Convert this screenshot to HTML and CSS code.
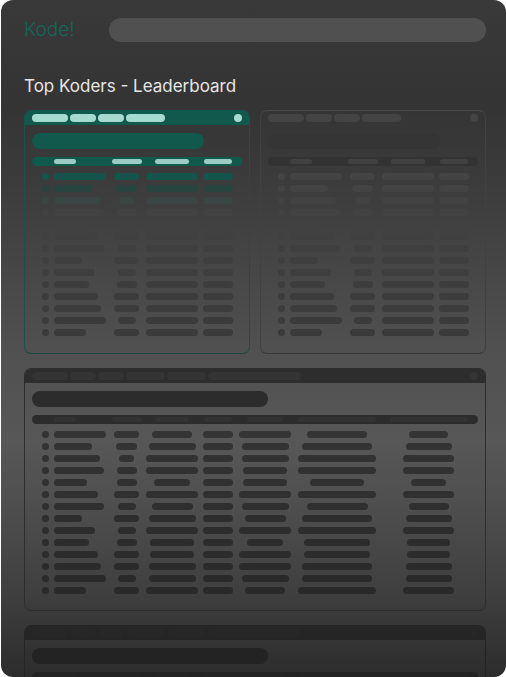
FILE: index.html
```html
<!DOCTYPE html>
<html lang="en">
<head>
<meta charset="utf-8">
<meta name="viewport" content="width=device-width, initial-scale=1">
<title>Kode!</title>
<link rel="stylesheet" href="styles.css">
</head>
<body>
<div class="app">
  <header class="topbar">
    <a class="logo" href="#">Kode!</a>
    <input class="search" type="search" aria-label="Search">
  </header>
  <main>
    <h1 class="title">Top Koders - Leaderboard</h1>
    <div class="boards">
      <section class="card card-active" data-columns="4"></section>
      <section class="card card-idle" data-columns="4"></section>
      <section class="card card-wide" data-columns="7"></section>
      <section class="card card-wide card-last" data-columns="7"></section>
    </div>
  </main>
</div>
<script src="script.js"></script>
</body>
</html>
```
FILE: script.js
```js
// Placeholder bar widths, one list per leaderboard row.
const rows = [
  [52, 25, 40, 30, 52, 60, 39],
  [38, 21, 47, 30, 47, 70, 46],
  [46, 15, 52, 30, 47, 78, 51],
  [50, 20, 52, 30, 44, 78, 51],
  [33, 20, 36, 30, 44, 54, 35],
  [44, 25, 52, 30, 52, 78, 51],
  [50, 18, 41, 30, 47, 61, 40],
  [28, 25, 47, 30, 41, 70, 46],
  [41, 18, 52, 30, 52, 78, 51],
  [35, 20, 44, 30, 36, 66, 43],
  [44, 25, 44, 30, 52, 66, 43],
  [47, 25, 47, 30, 52, 70, 46],
  [52, 18, 47, 30, 47, 70, 46],
  [32, 25, 52, 30, 40, 78, 51]
];
const headings = [22, 30, 34, 28, 36, 78, 78];
const tabs = { 4: [36, 26, 26, 39], 7: [36, 26, 26, 39, 39, 93] };

const bar = (width) => `<span class="bar" style="width:${width}px"></span>`;

document.querySelectorAll(".card").forEach((card) => {
  const count = Number(card.dataset.columns);
  const cells = (list, tag) =>
    list.slice(0, count).map((w) => `<${tag}>${bar(w)}</${tag}>`).join("");
  const body = rows.map((row, i) => {
    const widths = count === 4 ? [row[0], row[1], 52, row[3]] : row;
    return `<tr style="--i:${i}"><td><span class="bar dot"></span></td>${cells(widths, "td")}</tr>`;
  }).join("");
  card.innerHTML = `
    <div class="card-head">${tabs[count].map(bar).join("")}<span class="bar status"></span></div>
    <div class="card-body">
      <div class="card-title"></div>
      <table class="table">
        <thead><tr><th></th>${cells(headings, "th")}</tr></thead>
        <tbody>${body}</tbody>
      </table>
    </div>`;
});
```
FILE: styles.css
```css
* {
  box-sizing: border-box;
}

body {
  margin: 0;
  background: #fff;
  font-family: Inter, "Open Sans", sans-serif;
}

.app {
  height: 100vh;
  margin-left: 1px;
  padding: 18px 20px 0 23px;
  overflow: hidden;
  border-radius: 12px;
  background: linear-gradient(#393939 0%, #343434 15%, #3b3b3b 26%, #434343 36%, #505050 51%, #575757 65%, #505050 73%, #404040 87%, #2c2c2c 100%);
}

.topbar {
  display: flex;
  align-items: center;
  gap: 32px;
}

.logo {
  flex: 0 0 53px;
  color: #14665a;
  font-size: 19px;
  font-weight: 300;
  line-height: 24px;
  text-decoration: none;
}

.search {
  flex: 1;
  min-width: 0;
  height: 24px;
  padding: 0 12px;
  border: 0;
  border-radius: 12px;
  background: #505050;
  color: #ddd;
}

.title {
  margin: 32px 0 12px;
  color: #e6e6e6;
  font-size: 17px;
  font-weight: 400;
  line-height: 24px;
}

.boards {
  display: grid;
  grid-template-columns: 1fr 1fr;
  gap: 14px 10px;
}

.card {
  --border: #3a3a3a;
  --from: #444;
  --to: #3a3a3a;
  border: 1px solid var(--border);
  border-radius: 7px;
}

.bar {
  display: block;
  height: 7px;
  border-radius: 4px;
  background: var(--fill);
}

.card-head {
  display: flex;
  gap: 2px;
  height: 14px;
  padding: 3px 7px;
  border-radius: 6px 6px 0 0;
  background: var(--head);
}

.card-head .bar {
  height: 8px;
  background: var(--tab);
}

.card-head .status {
  width: 8px;
  margin-left: auto;
}

.card-body {
  padding: 8px 7px 17px;
}

.card-title {
  width: 82%;
  height: 16px;
  margin-bottom: 8px;
  border-radius: 8px;
  background: var(--strong);
}

.table,
.table tbody {
  display: block;
}

.table thead {
  display: block;
  margin-bottom: 7px;
  border-radius: 5px;
  background: var(--strong);
}

.table tr {
  --fill: color-mix(in srgb, var(--to) calc(var(--i) * 7.6%), var(--from));
  display: grid;
  grid-template-columns: 8px 53fr 31fr 52fr 32fr;
  gap: 4px;
  padding: 0 8px 0 10px;
}

.table tbody tr + tr {
  margin-top: 5px;
}

.table th,
.table td {
  display: flex;
  justify-content: center;
  padding: 0;
}

.table td:nth-child(-n + 2),
.table th:nth-child(2) {
  justify-content: flex-start;
}

.table thead .bar {
  height: 5px;
  margin: 2px 0;
  background: var(--heading);
}

.table .dot {
  width: 7px;
}

.card-active {
  --head: #11584d;
  --tab: #a6dbd2;
  --strong: #11584d;
  --heading: #9accc3;
  border-color: #12574c #14544b #1d4740;
}

.card-active tbody tr:nth-child(1) {
  --fill: #14544a;
}

.card-active tbody tr:nth-child(2) {
  --fill: #28443f;
}

.card-active tbody tr:nth-child(3) {
  --fill: #3a4644;
}

.card-idle {
  --head: transparent;
  --tab: #444;
  --strong: #333;
  --heading: #414141;
  border-color: #494949 #414141 #383838;
}

.card-idle .card-title {
  background: #353535;
}

.card-wide {
  --border: #2d2d2d;
  --head: #2d2d2d;
  --tab: #343434;
  --strong: #2c2c2c;
  --heading: #323232;
  --from: #343434;
  --to: #292929;
  grid-column: 1 / -1;
}

.card-wide .card-body {
  padding-bottom: 16px;
}

.card-wide .card-title {
  width: 53%;
}

.card-wide tr {
  grid-template-columns: 8px 53fr 31fr 52fr 32fr 54fr 82fr 93fr;
  padding-right: 3px;
}

.card-last {
  --border: #252525;
  --head: #252525;
  --tab: #272727;
  --strong: #232323;
  --heading: #242424;
}
```
